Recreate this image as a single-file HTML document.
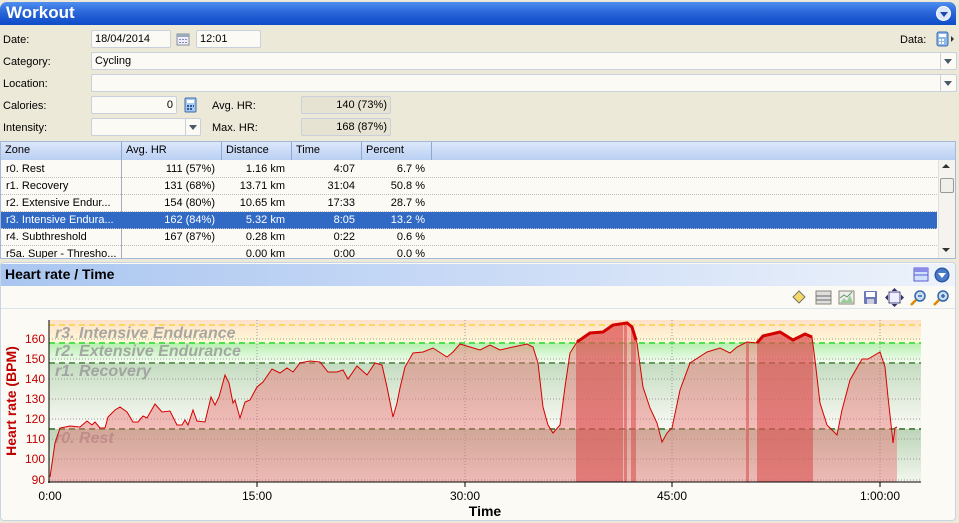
<!DOCTYPE html>
<html><head><meta charset="utf-8">
<style>
*{margin:0;padding:0;box-sizing:border-box}
body{width:959px;height:523px;overflow:hidden;background:#ece9d8;font-family:"Liberation Sans",Arial,sans-serif;font-size:11px;color:#000;position:relative}
.a{position:absolute}
.hdr{left:0;top:2px;width:956px;height:23px;border-radius:7px 7px 0 0;background:linear-gradient(#4f8ff0,#2a66d8 45%,#0d4bc8);}
.hdr span{position:absolute;left:6px;top:1px;color:#fff;font-weight:bold;font-size:17px}
.inp{position:absolute;background:#fbfaf5;border:1px solid #c8d0dc;border-radius:2px;height:18px;padding:2px 3px;font-size:11px}
.lbl{position:absolute;font-size:11px}
.ro{background:#e6e3d3;text-align:right}
.dd{position:absolute;width:14px;height:16px;border-left:1px solid #c8d0dc}
.dd:after{content:"";position:absolute;left:3px;top:6px;border:4px solid transparent;border-top:5px solid #4a5a6a}
.grid{left:0;top:141px;width:956px;height:118px;background:#fbfaf5;border:1px solid #a6b8d8;overflow:hidden}
.gh{position:absolute;top:0;height:18px;background:linear-gradient(#dce7fa,#b9cff3);border-right:1px solid #8ea8d0;padding:2px 4px;font-size:11px}
.row{position:absolute;left:0;width:936px;height:17px;border-bottom:1px dotted #c0c0c0}
.row div{position:absolute;top:2px;font-size:11px;white-space:nowrap}
.sel{background:#316ac5;color:#fff}
</style></head><body>
<div class="a hdr"><span>Workout</span>
<div class="a" style="right:5px;top:4px;width:15px;height:15px;border-radius:50%;background:#dbe6fb;border:1px solid #fff"><div class="a" style="left:3px;top:5px;border:4px solid transparent;border-top:5px solid #1a4aa8"></div></div></div>

<div class="lbl" style="left:3px;top:34px">Date:</div>
<div class="inp" style="left:91px;top:30px;width:80px">18/04/2014</div>
<svg class="a" style="left:176px;top:32px" width="14" height="14"><rect x="1" y="2" width="12" height="11" fill="#eef" stroke="#8a8aa0"/><rect x="1" y="2" width="12" height="3" fill="#9ab"/><g fill="#88a"><rect x="3" y="7" width="2" height="1"/><rect x="6" y="7" width="2" height="1"/><rect x="9" y="7" width="2" height="1"/><rect x="3" y="10" width="2" height="1"/><rect x="6" y="10" width="2" height="1"/><rect x="9" y="10" width="2" height="1"/></g></svg>
<div class="inp" style="left:196px;top:30px;width:65px">12:01</div>
<div class="lbl" style="left:900px;top:34px">Data:</div>
<svg class="a" style="left:936px;top:31px" width="20" height="16"><rect x="1" y="1" width="11" height="14" rx="2" fill="#8fb8e8" stroke="#3a6ab0"/><rect x="3" y="3" width="7" height="3" fill="#fff"/><g fill="#fff"><rect x="3" y="8" width="2" height="2"/><rect x="6" y="8" width="2" height="2"/><rect x="3" y="11" width="2" height="2"/><rect x="6" y="11" width="2" height="2"/></g><path d="M15 5l3 3-3 3z" fill="#333"/></svg>

<div class="lbl" style="left:3px;top:56px">Category:</div>
<div class="inp" style="left:91px;top:52px;width:866px">Cycling</div>
<div class="dd" style="left:940px;top:53px"></div>
<div class="lbl" style="left:3px;top:78px">Location:</div>
<div class="inp" style="left:91px;top:74px;width:866px"></div>
<div class="dd" style="left:940px;top:75px"></div>

<div class="lbl" style="left:3px;top:100px">Calories:</div>
<div class="inp" style="left:91px;top:96px;width:86px;text-align:right">0</div>
<svg class="a" style="left:184px;top:97px" width="14" height="16"><rect x="1" y="1" width="11" height="14" rx="1" fill="#a8c8ec" stroke="#3a6ab0"/><rect x="3" y="3" width="7" height="3" fill="#fff"/><g fill="#2a5aa0"><rect x="3" y="8" width="2" height="2"/><rect x="6" y="8" width="2" height="2"/><rect x="9" y="8" width="1" height="2"/><rect x="3" y="11" width="2" height="2"/><rect x="6" y="11" width="2" height="2"/></g></svg>
<div class="lbl" style="left:212px;top:100px">Avg. HR:</div>
<div class="inp ro" style="left:301px;top:96px;width:90px">140 (73%)</div>
<div class="lbl" style="left:3px;top:122px">Intensity:</div>
<div class="inp" style="left:91px;top:118px;width:110px"></div>
<div class="dd" style="left:185px;top:119px"></div>
<div class="lbl" style="left:212px;top:122px">Max. HR:</div>
<div class="inp ro" style="left:301px;top:118px;width:90px">168 (87%)</div>

<div class="a grid">
<div class="gh" style="left:0;width:121px">Zone</div>
<div class="gh" style="left:121px;width:100px">Avg. HR</div>
<div class="gh" style="left:221px;width:70px">Distance</div>
<div class="gh" style="left:291px;width:70px">Time</div>
<div class="gh" style="left:361px;width:70px">Percent</div>
<div class="gh" style="left:431px;width:525px;border-right:0"></div>
<div class="a" style="left:120px;top:18px;width:1px;height:100px;background:#aab"></div>
<div class="row" style="top:19px"><div style="left:5px">r0. Rest</div><div style="right:722px">111 (57%)</div><div style="right:652px">1.16 km</div><div style="right:582px">4:07</div><div style="right:512px">6.7 %</div></div>
<div class="row" style="top:36px"><div style="left:5px">r1. Recovery</div><div style="right:722px">131 (68%)</div><div style="right:652px">13.71 km</div><div style="right:582px">31:04</div><div style="right:512px">50.8 %</div></div>
<div class="row" style="top:53px"><div style="left:5px">r2. Extensive Endur...</div><div style="right:722px">154 (80%)</div><div style="right:652px">10.65 km</div><div style="right:582px">17:33</div><div style="right:512px">28.7 %</div></div>
<div class="row sel" style="top:70px"><div style="left:5px">r3. Intensive Endura...</div><div style="right:722px">162 (84%)</div><div style="right:652px">5.32 km</div><div style="right:582px">8:05</div><div style="right:512px">13.2 %</div></div>
<div class="row" style="top:87px"><div style="left:5px">r4. Subthreshold</div><div style="right:722px">167 (87%)</div><div style="right:652px">0.28 km</div><div style="right:582px">0:22</div><div style="right:512px">0.6 %</div></div>
<div class="row" style="top:104px"><div style="left:5px">r5a. Super - Thresho...</div><div style="right:652px">0.00 km</div><div style="right:582px">0:00</div><div style="right:512px">0.0 %</div></div>
<div class="a" style="left:937px;top:18px;width:17px;height:100px;background:#f4f3ee;border-left:1px solid #e0e0e0">
<div class="a" style="left:3px;top:4px;border:4px solid transparent;border-bottom:4px solid #333;border-top:0"></div>
<div class="a" style="left:1px;top:18px;width:14px;height:15px;border:1px solid #999;border-radius:2px;background:#f0f0ea"></div>
<div class="a" style="left:3px;top:88px;border:4px solid transparent;border-top:4px solid #333;border-bottom:0"></div></div>
</div>

<div class="a" style="left:0;top:262px;width:956px;height:259px;background:#fbfaf5;border:1px solid #c8d4e4;border-radius:4px"></div>
<div class="a" style="left:1px;top:264px;width:954px;height:22px;background:linear-gradient(90deg,#aac6f0,#c9daf6 50%,#eef3fb)"><span class="a" style="left:4px;top:2px;font-size:14px;font-weight:bold">Heart rate / Time</span></div>
<svg class="a" style="left:912px;top:266px" width="44" height="18"><rect x="2" y="2" width="14" height="13" fill="#cfe0fa" stroke="#5a5ad0"/><rect x="2" y="2" width="14" height="4" fill="#8a8ae8"/><line x1="2" y1="9" x2="16" y2="9" stroke="#5a5ad0"/><circle cx="30" cy="9" r="7.5" fill="#2a5aa0"/><circle cx="30" cy="9" r="6" fill="#4a7ac8"/><path d="M26 7h8l-4 5z" fill="#fff"/></svg>
<div class="a" style="left:1px;top:308px;width:954px;height:1px;background:#dde3ea"></div>
<svg class="a" style="left:790px;top:288px" width="166" height="20">
<path d="M9 3l6 6-6 6-6-6z" fill="#f6d86a" stroke="#776"/>
<rect x="26" y="3" width="15" height="13" fill="#ddd" stroke="#887"/><line x1="26" y1="8" x2="41" y2="8" stroke="#666"/><line x1="26" y1="12" x2="41" y2="12" stroke="#666"/>
<rect x="49" y="3" width="15" height="13" fill="#eee" stroke="#887"/><path d="M50 15l4-5 3 3 3-6 3 8z" fill="#9c9"/><path d="M50 10l4-3 3 2 5-5" stroke="#696" fill="none"/>
<rect x="74" y="3" width="13" height="13" rx="1" fill="#6a7ab8"/><rect x="76" y="4" width="9" height="5" fill="#fff"/><rect x="77" y="11" width="7" height="5" fill="#ccd"/>
<rect x="99" y="4" width="11" height="11" fill="#eef" stroke="#448"/><path d="M104.5 0l3 3h-6zM104.5 19l3-3h-6zM95 9.5l3-3v6zM114 9.5l-3-3v6z" fill="#336"/>
<circle cx="130" cy="8" r="5" fill="#cde" stroke="#36a" stroke-width="1.5"/><line x1="126" y1="12" x2="121" y2="17" stroke="#d80" stroke-width="2.5"/><line x1="128" y1="8" x2="132" y2="8" stroke="#36a" stroke-width="1.5"/>
<circle cx="153" cy="8" r="5" fill="#cde" stroke="#36a" stroke-width="1.5"/><line x1="149" y1="12" x2="144" y2="17" stroke="#d80" stroke-width="2.5"/><path d="M151 8h4M153 6v4" stroke="#36a" stroke-width="1.5"/>
</svg>

<svg class="a" style="left:0;top:0" width="959" height="523" font-family="Liberation Sans, Arial, sans-serif">
<defs>
<linearGradient id="gy" x1="0" y1="0" x2="0" y2="1"><stop offset="0" stop-color="#fde0c8"/><stop offset="1" stop-color="#fffad8"/></linearGradient>
<linearGradient id="gg" x1="0" y1="0" x2="0" y2="1"><stop offset="0" stop-color="#b8f0b0"/><stop offset="1" stop-color="#f4fcf0"/></linearGradient>
<linearGradient id="g1" x1="0" y1="0" x2="0" y2="1"><stop offset="0" stop-color="#c4dcc0"/><stop offset="1" stop-color="#fbfaf5"/></linearGradient>
<linearGradient id="g0" x1="0" y1="0" x2="0" y2="1"><stop offset="0" stop-color="#bcd4b8"/><stop offset="1" stop-color="#f2f6ee"/></linearGradient>
<path id="area" d="M49 482L50 477L55 443L60 428L70 426L80 427L87 421L92 425L95 422L100 428L105 428L108 417L115 410L120 407L127 412L133 422L138 422L143 416L147 418L155 404L162 412L170 411L177 425L182 425L185 420L188 425L193 410L197 421L205 422L211 397L215 405L219 397L225 375L229 383L233 403L235 400L240 418L245 402L250 400L257 387L263 382L272 369L280 373L287 368L293 372L300 363L310 361L320 362L328 372L337 372L343 370L348 379L357 366L367 375L375 363L382 365L387 387L393 417L397 403L400 388L405 367L413 353L423 352L433 348L447 357L453 352L460 344L470 347L480 350L490 345L500 350L513 347L527 344L533 347L538 363L543 407L548 425L553 433L560 425L565 387L570 353L577 342L590 333L603 332L613 325L627 323L632 327L637 343L643 387L650 408L657 423L662 442L667 433L672 428L680 390L690 363L707 352L720 348L730 353L737 347L747 342L757 343L763 336L780 332L793 340L805 334L812 337L815 360L820 403L827 425L837 435L842 410L850 380L862 359L868 359L880 352L885 367L888 397L892 433L893 443L895 428L897 427L897 482Z"/>
<clipPath id="cp"><use href="#area"/></clipPath>
</defs>
<rect x="49" y="320" width="872" height="23" fill="url(#gy)"/>
<rect x="49" y="343" width="872" height="20" fill="url(#gg)"/>
<rect x="49" y="363" width="872" height="66" fill="url(#g1)"/>
<rect x="49" y="429" width="872" height="53" fill="url(#g0)"/>
<g stroke="#999" stroke-dasharray="1,2" stroke-width="1">
<line x1="49" y1="339" x2="921" y2="339"/><line x1="49" y1="359" x2="921" y2="359"/><line x1="49" y1="379" x2="921" y2="379"/><line x1="49" y1="399" x2="921" y2="399"/><line x1="49" y1="419" x2="921" y2="419"/><line x1="49" y1="439" x2="921" y2="439"/><line x1="49" y1="459" x2="921" y2="459"/><line x1="49" y1="480" x2="921" y2="480"/>
<line x1="257" y1="320" x2="257" y2="482"/><line x1="465" y1="320" x2="465" y2="482"/><line x1="672" y1="320" x2="672" y2="482"/><line x1="880" y1="320" x2="880" y2="482"/>
</g>
<g stroke-dasharray="6,4" stroke-width="2"><line x1="49" y1="325" x2="921" y2="325" stroke="#f8d860"/><line x1="49" y1="343" x2="921" y2="343" stroke="#50e050"/><line x1="49" y1="363" x2="921" y2="363" stroke="#6a9a60"/><line x1="49" y1="429" x2="921" y2="429" stroke="#5a8a50"/></g>
<g font-size="16" font-style="italic" font-weight="bold" fill="#999" fill-opacity="0.85">
<text x="55" y="338">r3. Intensive Endurance</text><text x="55" y="356">r2. Extensive Endurance</text><text x="55" y="376">r1. Recovery</text><text x="55" y="443">r0. Rest</text></g>
<use href="#area" fill="#e87070" fill-opacity="0.45"/>
<g fill="#d84848" fill-opacity="0.55" clip-path="url(#cp)"><rect x="576" y="320" width="47" height="162"/><rect x="624" y="320" width="3" height="162"/><rect x="631" y="320" width="5" height="162"/><rect x="746" y="320" width="3" height="162"/><rect x="757" y="320" width="56" height="162"/></g>
<path fill="none" stroke="#d40000" stroke-width="1" d="M50 477L55 443L60 428L70 426L80 427L87 421L92 425L95 422L100 428L105 428L108 417L115 410L120 407L127 412L133 422L138 422L143 416L147 418L155 404L162 412L170 411L177 425L182 425L185 420L188 425L193 410L197 421L205 422L211 397L215 405L219 397L225 375L229 383L233 403L235 400L240 418L245 402L250 400L257 387L263 382L272 369L280 373L287 368L293 372L300 363L310 361L320 362L328 372L337 372L343 370L348 379L357 366L367 375L375 363L382 365L387 387L393 417L397 403L400 388L405 367L413 353L423 352L433 348L447 357L453 352L460 344L470 347L480 350L490 345L500 350L513 347L527 344L533 347L538 363L543 407L548 425L553 433L560 425L565 387L570 353L577 342L590 333L603 332L613 325L627 323L632 327L637 343L643 387L650 408L657 423L662 442L667 433L672 428L680 390L690 363L707 352L720 348L730 353L737 347L747 342L757 343L763 336L780 332L793 340L805 334L812 337L815 360L820 403L827 425L837 435L842 410L850 380L862 359L868 359L880 352L885 367L888 397L892 433L893 443L895 428L897 427"/>
<path fill="none" stroke="#d40000" stroke-width="3" d="M577 342L590 333L603 332L613 325L627 323L632 327L636 340M757 343L763 336L780 332L793 340L805 334L812 337"/>
<line x1="49" y1="320" x2="49" y2="483" stroke="#000"/><line x1="48" y1="482" x2="921" y2="482" stroke="#000"/>
<g stroke="#000"><line x1="257" y1="482" x2="257" y2="487"/><line x1="465" y1="482" x2="465" y2="487"/><line x1="672" y1="482" x2="672" y2="487"/><line x1="880" y1="482" x2="880" y2="487"/></g>
<g font-size="12" fill="#c00000" text-anchor="end"><text x="45" y="343">160</text><text x="45" y="363">150</text><text x="45" y="383">140</text><text x="45" y="403">130</text><text x="45" y="423">120</text><text x="45" y="443">110</text><text x="45" y="463">100</text><text x="45" y="484">90</text></g>
<text transform="translate(16,401) rotate(-90)" text-anchor="middle" font-size="14" font-weight="bold" fill="#c00000">Heart rate (BPM)</text>
<g font-size="12" fill="#000" text-anchor="middle"><text x="50" y="500">0:00</text><text x="257" y="500">15:00</text><text x="465" y="500">30:00</text><text x="672" y="500">45:00</text><text x="880" y="500">1:00:00</text></g>
<text x="485" y="516" font-size="14" font-weight="bold" text-anchor="middle">Time</text>
</svg>
</body></html>
